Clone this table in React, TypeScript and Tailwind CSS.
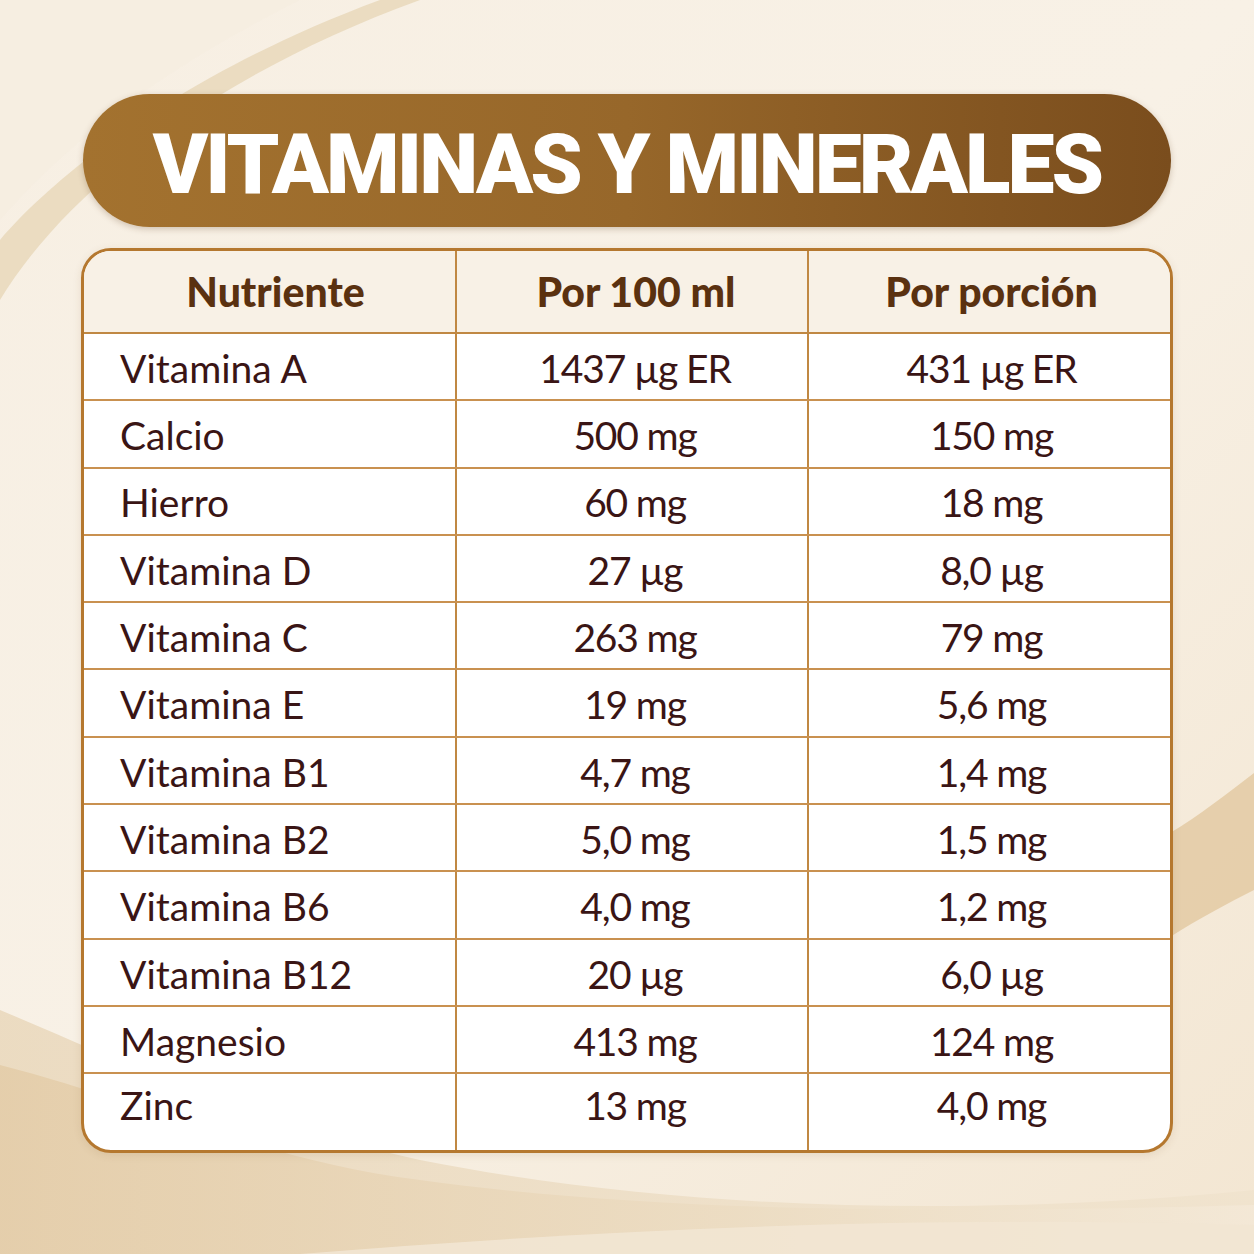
import React from "react";

const rows: [string, string, string][] = [
  ["Vitamina A", "1437 µg ER", "431 µg ER"],
  ["Calcio", "500 mg", "150 mg"],
  ["Hierro", "60 mg", "18 mg"],
  ["Vitamina D", "27 µg", "8,0 µg"],
  ["Vitamina C", "263 mg", "79 mg"],
  ["Vitamina E", "19 mg", "5,6 mg"],
  ["Vitamina B1", "4,7 mg", "1,4 mg"],
  ["Vitamina B2", "5,0 mg", "1,5 mg"],
  ["Vitamina B6", "4,0 mg", "1,2 mg"],
  ["Vitamina B12", "20 µg", "6,0 µg"],
  ["Magnesio", "413 mg", "124 mg"],
  ["Zinc", "13 mg", "4,0 mg"],
];

function Background() {
  return (
    <svg
      className="absolute inset-0 pointer-events-none"
      width="1254"
      height="1254"
      viewBox="0 0 1254 1254"
    >
      <defs>
        <linearGradient id="bg" x1="0" y1="0" x2="1" y2="1">
          <stop offset="0" stopColor="#f7efe3" />
          <stop offset="0.5" stopColor="#f8f1e6" />
          <stop offset="1" stopColor="#f3e6d2" />
        </linearGradient>
        <linearGradient id="band" x1="0" y1="0" x2="1" y2="0">
          <stop offset="0" stopColor="#e6d2b2" />
          <stop offset="1" stopColor="#efe2cc" />
        </linearGradient>
        <linearGradient id="band2" x1="0" y1="0" x2="1" y2="0">
          <stop offset="0" stopColor="#e3cba6" />
          <stop offset="0.6" stopColor="#ecdcc2" />
          <stop offset="1" stopColor="#f4e9d8" />
        </linearGradient>
      </defs>
      <rect width="1254" height="1254" fill="url(#bg)" />
      <path
        d="M0 300 C 60 200, 200 80, 420 0 L 380 0 C 190 70, 60 170, 0 240 Z"
        fill="#e9d9bd"
        opacity="0.9"
      />
      <path
        d="M0 220 C 70 140, 160 70, 300 0 L 0 0 Z"
        fill="#f5ecdf"
        opacity="0.6"
      />
      <path
        d="M1254 773 C 1225 795, 1200 815, 1170 833 L 1170 937 C 1200 918, 1230 902, 1254 890 Z"
        fill="#e4cca6"
        opacity="0.9"
      />
      <path
        d="M0 1010 C 120 1060, 240 1120, 420 1160 C 700 1215, 1000 1215, 1254 1190 L 1254 1254 L 0 1254 Z"
        fill="url(#band)"
        opacity="0.7"
      />
      <path
        d="M0 1065 C 140 1100, 260 1160, 420 1180 C 640 1210, 900 1215, 1254 1205 L 1254 1254 L 0 1254 Z"
        fill="url(#band2)"
        opacity="0.8"
      />
      <path
        d="M300 1254 C 600 1230, 900 1215, 1254 1225 L 1254 1254 Z"
        fill="#f2e6d3"
        opacity="0.9"
      />
    </svg>
  );
}

export default function App() {
  return (
    <div className="relative w-[1254px] h-[1254px] overflow-hidden bg-[#f7efe3]">
      <Background />
      <div className="relative flex flex-col pt-[94px] px-[81px]">
        <div className="mx-[2px] h-[133px] rounded-full bg-gradient-to-r from-[#a3722f] via-[#97672a] to-[#7a4d1d] flex items-center justify-center shadow-[0_2px_6px_rgba(90,55,20,0.25)]">
          <span
            className="text-white text-[84px] leading-none tracking-[-0.035em] pt-[8px]"
            style={{ fontFamily: "Roboto, 'Liberation Sans', sans-serif", fontWeight: 900 }}
          >
            VITAMINAS Y MINERALES
          </span>
        </div>

        <div className="mt-[21px] w-[1092px] rounded-[30px] border-[3px] border-[#b5782f] bg-white overflow-hidden shadow-[0_2px_8px_rgba(120,80,30,0.12)]">
          <div
            className="flex h-[83px] bg-[#f8f1e6] border-b-2 border-[#c08843] text-[41px] text-[#5a3110]"
            style={{ fontFamily: "Lato, 'Open Sans', sans-serif", fontWeight: 900 }}
          >
            <div className="w-[373px] flex items-center justify-center border-r-2 border-[#c08843] pl-[12px]">
              Nutriente
            </div>
            <div className="w-[352px] flex items-center justify-center border-r-2 border-[#c08843] pl-[8px]">
              Por 100 ml
            </div>
            <div className="flex-1 flex items-center justify-center pl-[4px]">Por porción</div>
          </div>
          {rows.map((r, i) => {
            const last = i === rows.length - 1;
            return (
              <div
                key={r[0]}
                className={
                  last
                    ? "flex h-[76px] text-[39px] text-[#3a1515]"
                    : "flex h-[67.3px] border-b-2 border-[#c99150] text-[39px] text-[#3a1515]"
                }
                style={{ fontFamily: "Lato, 'Open Sans', sans-serif" }}
              >
                <div
                  className={
                    last
                      ? "w-[373px] flex items-start pt-[2px] pl-[36px] border-r-2 border-[#c08843]"
                      : "w-[373px] flex items-center pt-[3px] pl-[36px] border-r-2 border-[#c08843]"
                  }
                >
                  {r[0]}
                </div>
                <div
                  className={
                    last
                      ? "w-[352px] flex items-start pt-[2px] pl-[6px] justify-center border-r-2 border-[#c08843] tracking-[-0.03em]"
                      : "w-[352px] flex items-center pt-[3px] pl-[6px] justify-center border-r-2 border-[#c08843] tracking-[-0.03em]"
                  }
                >
                  {r[1]}
                </div>
                <div
                  className={
                    last
                      ? "flex-1 flex items-start pt-[2px] pl-[4px] justify-center tracking-[-0.03em]"
                      : "flex-1 flex items-center pt-[3px] pl-[4px] justify-center tracking-[-0.03em]"
                  }
                >
                  {r[2]}
                </div>
              </div>
            );
          })}
        </div>
      </div>
    </div>
  );
}
